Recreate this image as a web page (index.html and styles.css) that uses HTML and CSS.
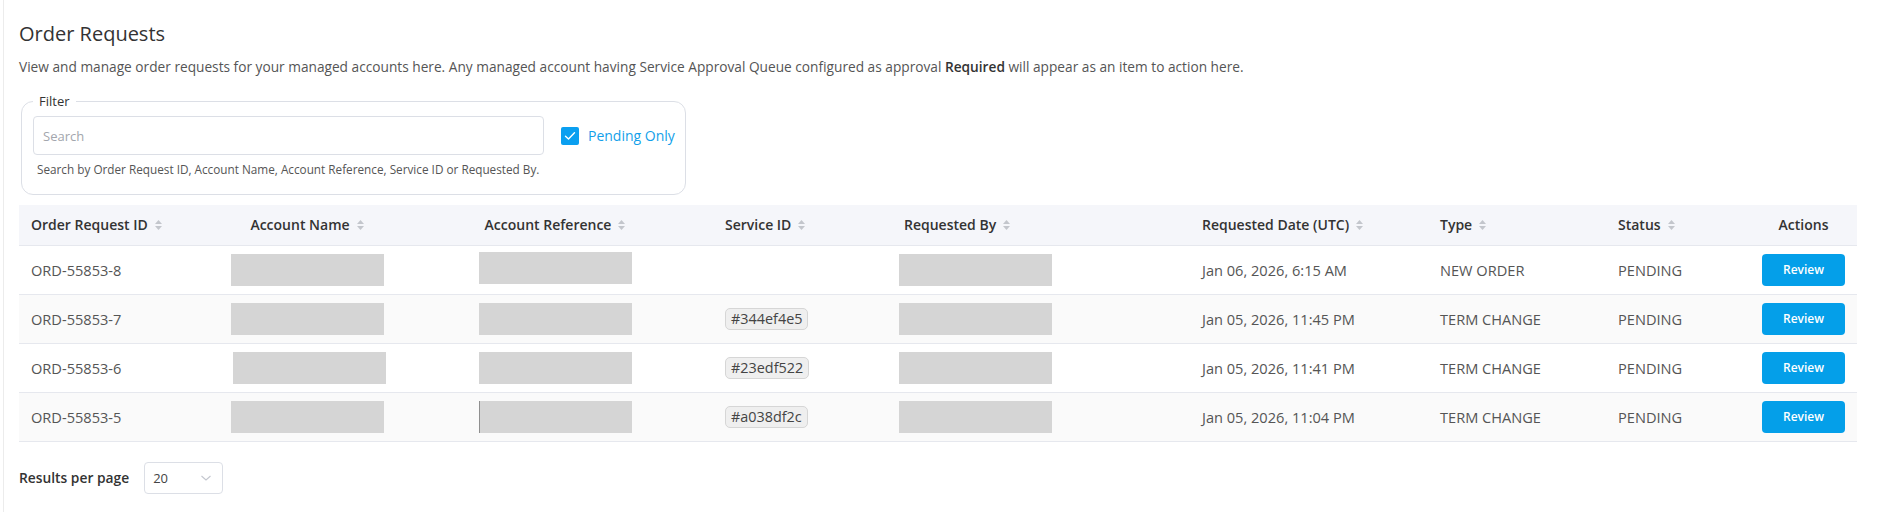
FILE: index.html
```html
<!DOCTYPE html>
<html lang="en">
<head>
<meta charset="utf-8">
<title>Order Requests</title>
<link rel="stylesheet" href="styles.css">
</head>
<body>
<div class="page">
  <h1 class="title">Order Requests</h1>
  <p class="desc">View and manage order requests for your managed accounts here. Any managed account having Service Approval Queue configured as approval <strong>Required</strong> will appear as an item to action here.</p>

  <fieldset class="filter">
    <legend>Filter</legend>
    <div class="filter-row">
      <div class="search-col">
        <input class="search" type="text" placeholder="Search">
        <div class="hint">Search by Order Request ID, Account Name, Account Reference, Service ID or Requested By.</div>
      </div>
      <label class="check">
        <span class="box"><svg width="12" height="10" viewBox="0 0 12 10"><path d="M1.5 5.2 L4.5 8 L10.5 1.8" fill="none" stroke="#fff" stroke-width="1.4" stroke-linecap="round" stroke-linejoin="round"/></svg></span>
        <span class="check-label">Pending Only</span>
      </label>
    </div>
  </fieldset>

  <table class="grid">
    <colgroup>
      <col class="c1"><col class="c2"><col class="c3"><col class="c4"><col class="c5"><col class="c6"><col class="c7"><col class="c8"><col class="c9">
    </colgroup>
    <thead>
      <tr>
        <th><span class="hd">Order Request ID <svg class="sort" width="9" height="12" viewBox="0 0 9 12"><path d="M4.5 1 L8 5 H1 Z M4.5 11 L8 7 H1 Z" fill="#c3c6cc"/></svg></span></th>
        <th><span class="hd centered">Account Name <svg class="sort" width="9" height="12" viewBox="0 0 9 12"><path d="M4.5 1 L8 5 H1 Z M4.5 11 L8 7 H1 Z" fill="#c3c6cc"/></svg></span></th>
        <th><span class="hd centered">Account Reference <svg class="sort" width="9" height="12" viewBox="0 0 9 12"><path d="M4.5 1 L8 5 H1 Z M4.5 11 L8 7 H1 Z" fill="#c3c6cc"/></svg></span></th>
        <th><span class="hd">Service ID <svg class="sort" width="9" height="12" viewBox="0 0 9 12"><path d="M4.5 1 L8 5 H1 Z M4.5 11 L8 7 H1 Z" fill="#c3c6cc"/></svg></span></th>
        <th class="th-req"><span class="hd">Requested By <svg class="sort" width="9" height="12" viewBox="0 0 9 12"><path d="M4.5 1 L8 5 H1 Z M4.5 11 L8 7 H1 Z" fill="#c3c6cc"/></svg></span></th>
        <th><span class="hd">Requested Date (UTC) <svg class="sort" width="9" height="12" viewBox="0 0 9 12"><path d="M4.5 1 L8 5 H1 Z M4.5 11 L8 7 H1 Z" fill="#c3c6cc"/></svg></span></th>
        <th><span class="hd">Type <svg class="sort" width="9" height="12" viewBox="0 0 9 12"><path d="M4.5 1 L8 5 H1 Z M4.5 11 L8 7 H1 Z" fill="#c3c6cc"/></svg></span></th>
        <th><span class="hd">Status <svg class="sort" width="9" height="12" viewBox="0 0 9 12"><path d="M4.5 1 L8 5 H1 Z M4.5 11 L8 7 H1 Z" fill="#c3c6cc"/></svg></span></th>
        <th class="th-act">Actions</th>
      </tr>
    </thead>
    <tbody>
      <tr>
        <td>ORD-55853-8</td>
        <td><div class="redact"></div></td>
        <td><div class="redact up"></div></td>
        <td></td>
        <td><div class="redact"></div></td>
        <td>Jan 06, 2026, 6:15 AM</td>
        <td>NEW ORDER</td>
        <td>PENDING</td>
        <td class="td-act"><button class="review">Review</button></td>
      </tr>
      <tr class="alt">
        <td>ORD-55853-7</td>
        <td><div class="redact"></div></td>
        <td><div class="redact"></div></td>
        <td><span class="tag">#344ef4e5</span></td>
        <td><div class="redact"></div></td>
        <td>Jan 05, 2026, 11:45 PM</td>
        <td>TERM CHANGE</td>
        <td>PENDING</td>
        <td class="td-act"><button class="review">Review</button></td>
      </tr>
      <tr>
        <td>ORD-55853-6</td>
        <td><div class="redact shift"></div></td>
        <td><div class="redact"></div></td>
        <td><span class="tag">#23edf522</span></td>
        <td><div class="redact"></div></td>
        <td>Jan 05, 2026, 11:41 PM</td>
        <td>TERM CHANGE</td>
        <td>PENDING</td>
        <td class="td-act"><button class="review">Review</button></td>
      </tr>
      <tr class="alt">
        <td>ORD-55853-5</td>
        <td><div class="redact"></div></td>
        <td><div class="redact edge"></div></td>
        <td><span class="tag">#a038df2c</span></td>
        <td><div class="redact"></div></td>
        <td>Jan 05, 2026, 11:04 PM</td>
        <td>TERM CHANGE</td>
        <td>PENDING</td>
        <td class="td-act"><button class="review">Review</button></td>
      </tr>
    </tbody>
  </table>

  <div class="pager">
    <span class="pager-label">Results per page</span>
    <div class="select">
      <span>20</span>
      <svg width="12" height="8" viewBox="0 0 12 8"><path d="M1.5 2 L6 6 L10.5 2" fill="none" stroke="#c4c7cf" stroke-width="1.1"/></svg>
    </div>
  </div>
</div>
</body>
</html>
```

FILE: styles.css
```css
* { box-sizing: border-box; }

html, body {
  margin: 0;
  padding: 0;
  background: #ffffff;
}

body {
  font-family: "Open Sans", "Liberation Sans", sans-serif;
  color: #555;
}

.page {
  margin-left: 3px;
  border-left: 1px solid #ececec;
  padding: 22px 20px 0 15px;
  min-height: 512px;
}

.title {
  margin: 0;
  font-size: 20px;
  line-height: 24px;
  font-weight: 500;
  color: #333;
}

.desc {
  margin: 12px 0 0;
  font-size: 13.7px;
  line-height: 18px;
  color: #555;
}

.desc strong {
  font-weight: 600;
  color: #333;
}

.filter {
  margin: 17px 0 0 2px;
  width: 665px;
  border: 1px solid #dcdfe6;
  border-radius: 12px;
  padding: 7px 10px 17px 11px;
}

.filter legend {
  padding: 0 6px;
  font-size: 13px;
  line-height: 16px;
  color: #333;
}

.filter-row {
  display: flex;
  align-items: flex-start;
  gap: 17px;
}

.search-col {
  display: flex;
  flex-direction: column;
}

.search {
  width: 511px;
  height: 39px;
  border: 1px solid #dcdfe6;
  border-radius: 4px;
  padding: 0 9px;
  font-family: inherit;
  font-size: 13px;
  color: #333;
  outline: none;
}

.search::placeholder {
  color: #a3a6ad;
}

.hint {
  margin-top: 6px;
  padding-left: 4px;
  font-size: 11.75px;
  line-height: 16px;
  color: #555;
}

.check {
  display: flex;
  align-items: center;
  gap: 9px;
  height: 39px;
}

.box {
  width: 18px;
  height: 18px;
  border-radius: 2px;
  background: #0a9ff0;
  display: flex;
  align-items: center;
  justify-content: center;
}

.check-label {
  font-size: 14px;
  color: #139fea;
}

.grid {
  margin-top: 10px;
  width: 1838px;
  border-collapse: collapse;
  table-layout: fixed;
}

.c1 { width: 200px; }
.c2 { width: 248px; }
.c3 { width: 246px; }
.c4 { width: 174px; }
.c5 { width: 303px; }
.c6 { width: 238px; }
.c7 { width: 178px; }
.c8 { width: 144px; }
.c9 { width: 107px; }

.grid thead tr {
  background: #f5f6fa;
}

.grid th {
  height: 40px;
  padding: 0 12px;
  text-align: left;
  font-size: 14px;
  font-weight: 600;
  color: #333;
  border-bottom: 1px solid #e6e8ee;
  white-space: nowrap;
}

.hd {
  display: inline-flex;
  align-items: center;
  gap: 6px;
}

.hd.centered {
  width: 153px;
  justify-content: center;
}

.grid th.th-req { padding-left: 17px; }

.grid th.th-act { text-align: center; }

.sort { display: block; }

.grid td {
  height: 49px;
  padding: 0 12px;
  font-size: 14.6px;
  color: #555;
  border-bottom: 1px solid #e6e8ee;
  white-space: nowrap;
}

.grid tr.alt td {
  background: #fafafa;
}

.redact {
  width: 153px;
  height: 32px;
  background: #d5d5d5;
}

.redact.up { margin-top: -3px; }
.redact.shift { margin-left: 2px; }
.redact.edge { border-left: 1px solid #8f8f8f; }

.tag {
  display: inline-block;
  padding: 0 5px;
  height: 22px;
  line-height: 20px;
  border: 1px solid #d6d6d6;
  border-radius: 5px;
  background: #efefef;
  font-size: 14.4px;
  color: #444;
}

.grid td.td-act { text-align: center; }

.review {
  width: 83px;
  height: 32px;
  border: none;
  border-radius: 4px;
  background: #049fe9;
  color: #fff;
  font-family: inherit;
  font-size: 12px;
  font-weight: 600;
}

.pager {
  margin-top: 20px;
  display: flex;
  align-items: center;
  gap: 15px;
}

.pager-label {
  font-size: 13.8px;
  font-weight: 600;
  color: #333;
}

.select {
  width: 79px;
  height: 32px;
  border: 1px solid #dcdfe6;
  border-radius: 4px;
  padding: 0 10px 0 8px;
  display: flex;
  align-items: center;
  justify-content: space-between;
  font-size: 13px;
  color: #444;
}
```
